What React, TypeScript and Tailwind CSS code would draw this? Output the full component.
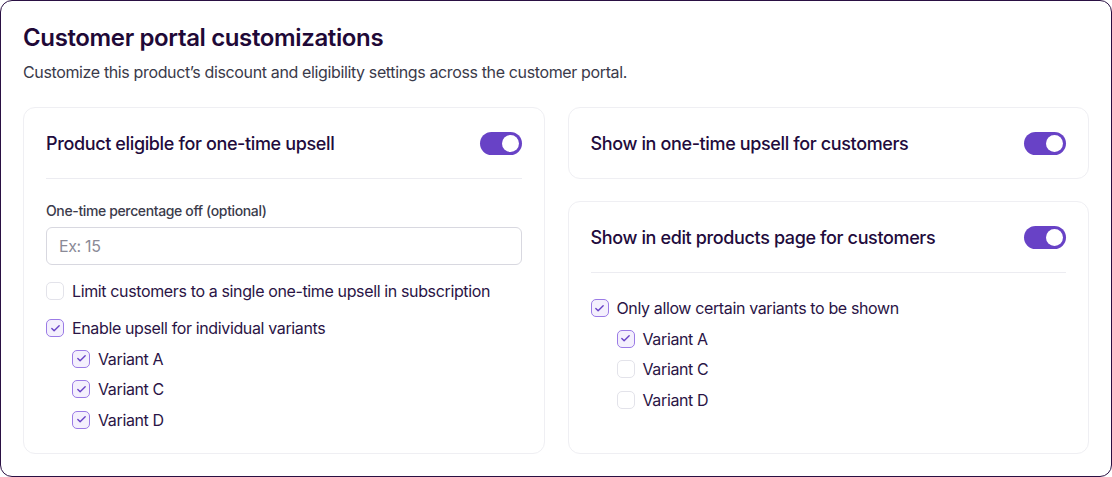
import { Check } from 'lucide-react'

function Toggle() {
  return (
    <div className="w-[42px] h-[23px] rounded-full bg-[#6842c6] flex items-center justify-end px-[3px] shrink-0">
      <div className="w-[17px] h-[17px] rounded-full bg-white" />
    </div>
  )
}

function Box({ checked }: { checked: boolean }) {
  return checked ? (
    <div className="w-[18px] h-[18px] rounded-[5px] border border-[#9b7be6] bg-[#f4f0fd] flex items-center justify-center shrink-0">
      <Check className="w-[11px] h-[11px] text-[#6842c6]" strokeWidth={3} />
    </div>
  ) : (
    <div className="w-[18px] h-[18px] rounded-[5px] border border-[#e3e3ea] bg-white shrink-0" />
  )
}

function Row({ label, checked, indent }: { label: string; checked: boolean; indent?: boolean }) {
  return (
    <div className={`flex items-center gap-2 h-6 ${indent ? 'pl-[26px]' : ''}`}>
      <Box checked={checked} />
      <span className="text-base text-[#2a1445]">{label}</span>
    </div>
  )
}

function CardHeader({ title, divider }: { title: string; divider?: boolean }) {
  return (
    <div className={`h-[71px] flex items-center justify-between ${divider ? 'border-b border-[#ececf1]' : ''}`}>
      <span className="text-lg font-medium text-[#220b3c] pt-px">{title}</span>
      <Toggle />
    </div>
  )
}

export default function App() {
  return (
    <div
      className="w-[1112px] h-[477px] bg-white tracking-[-0.023em]"
      style={{ fontFamily: 'Inter, "Noto Sans", sans-serif' }}
    >
      <div className="h-full rounded-[12px] border border-[#2a1043] px-[22px] pt-[21px]">
        <h1 className="text-2xl font-semibold text-[#1f0937] leading-8">Customer portal customizations</h1>
        <p className="text-base text-[#3a3a4a] mt-[6px] leading-6">
          Customize this product’s discount and eligibility settings across the customer portal.
        </p>

        <div className="grid grid-cols-2 gap-[23px] mt-[23px]">
          {/* Left */}
          <div className="h-[347px] rounded-[12px] border border-[#efeff3] px-[22px]">
            <CardHeader title="Product eligible for one-time upsell" divider />
            <div className="pt-[22px]">
              <label className="block text-sm font-medium text-[#3b3b4b] leading-5">One-time percentage off (optional)</label>
              <div className="mt-[6px] h-[38px] rounded-[6px] border border-[#d8d8e0] flex items-center px-3 text-base text-[#8a8a97]">
                Ex: 15
              </div>
              <div className="mt-[14px] flex flex-col gap-[13px]">
                <Row label="Limit customers to a single one-time upsell in subscription" checked={false} />
                <div className="flex flex-col gap-[6.5px]">
                  <Row label="Enable upsell for individual variants" checked />
                  <Row label="Variant A" checked indent />
                  <Row label="Variant C" checked indent />
                  <Row label="Variant D" checked indent />
                </div>
              </div>
            </div>
          </div>

          {/* Right */}
          <div className="flex flex-col gap-[22px]">
            <div className="h-[72px] rounded-[12px] border border-[#efeff3] px-[22px]">
              <CardHeader title="Show in one-time upsell for customers" />
            </div>
            <div className="h-[253px] rounded-[12px] border border-[#efeff3] px-[22px]">
              <CardHeader title="Show in edit products page for customers" divider />
              <div className="pt-[23px] flex flex-col gap-[6.5px]">
                <Row label="Only allow certain variants to be shown" checked />
                <Row label="Variant A" checked indent />
                <Row label="Variant C" checked={false} indent />
                <Row label="Variant D" checked={false} indent />
              </div>
            </div>
          </div>
        </div>
      </div>
    </div>
  )
}
